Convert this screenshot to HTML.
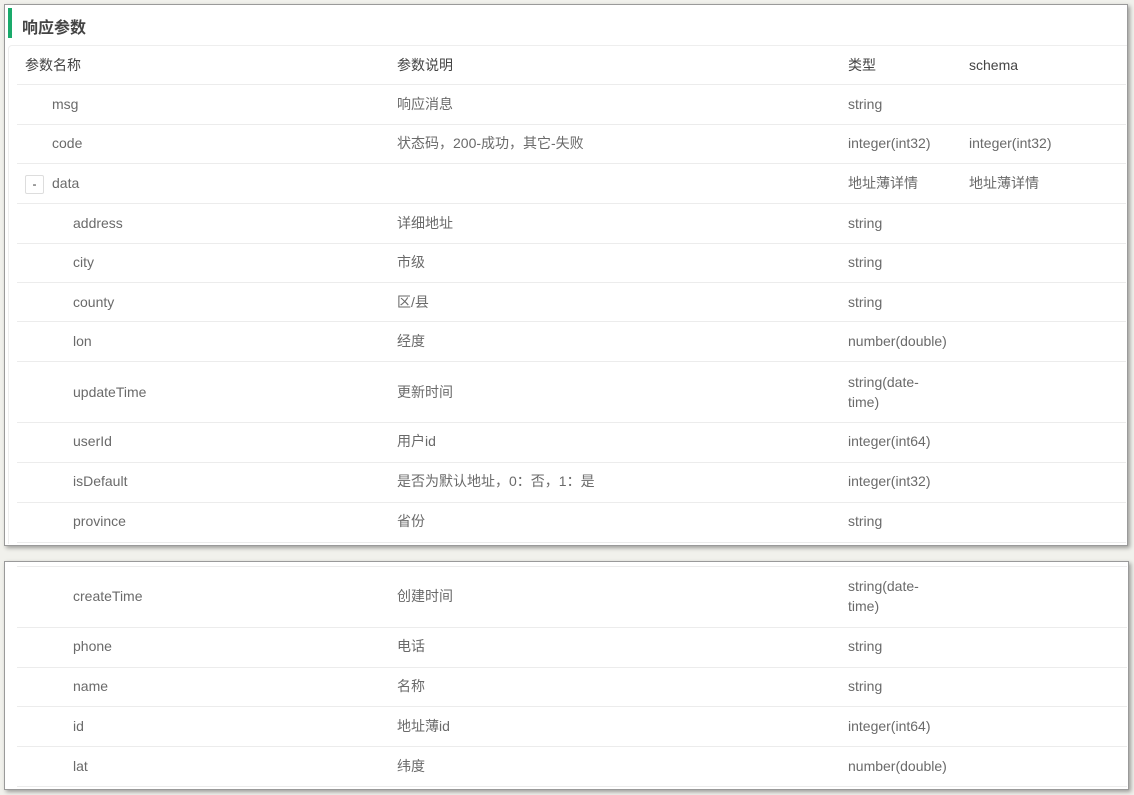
<!DOCTYPE html>
<html><head><meta charset="utf-8"><style>
body{margin:0;width:1134px;height:795px;background:#f1f1ec;position:relative;overflow:hidden;font-family:"Liberation Sans","Noto Sans CJK SC",sans-serif;font-size:14px;color:#6a6a6a}
.p{position:absolute;background:#fff;border:1px solid #9a9a9a;box-shadow:2px 2px 4px rgba(0,0,0,.35)}
.t{position:absolute;white-space:nowrap;line-height:20px}
.l{position:absolute;height:1px;background:#ececec;left:17px;right:0}
.bar{position:absolute;left:8px;top:8px;width:4px;height:30px;background:#1aaa6b}
.h{position:absolute;left:22px;top:14px;font-size:16px;font-weight:bold;color:#444}
.btn{position:absolute;left:25px;top:175px;width:17px;height:17px;border:1px solid #ddd;border-radius:2px;font-size:12px;text-align:center;line-height:16px;color:#333}
</style></head><body>
<div class="p" style="left:4px;top:4px;width:1122px;height:540px"></div>
<div class="p" style="left:4px;top:561px;width:1123px;height:227px"></div>
<div class="bar"></div><div class="h">响应参数</div>
<div style="position:absolute;left:8px;top:45px;width:1118px;height:498px;border-left:1px solid #eee;border-top:1px solid #eee;border-radius:4px 0 0 0"></div>
<div class="btn">-</div>
<div id="c"></div>
<script>
var rows=[
[65,"参数名称",25,"参数说明","类型","schema",1],
[104,"msg",52,"响应消息","string",""],
[143,"code",52,"状态码，200-成功，其它-失败","integer(int32)","integer(int32)"],
[183,"data",52,"","地址薄详情","地址薄详情"],
[223,"address",73,"详细地址","string",""],
[262,"city",73,"市级","string",""],
[302,"county",73,"区/县","string",""],
[341,"lon",73,"经度","number(double)",""],
[392,"updateTime",73,"更新时间","string(date-<br>time)",""],
[441,"userId",73,"用户id","integer(int64)",""],
[481,"isDefault",73,"是否为默认地址，0：否，1：是","integer(int32)",""],
[521,"province",73,"省份","string",""],
[596,"createTime",73,"创建时间","string(date-<br>time)",""],
[646,"phone",73,"电话","string",""],
[686,"name",73,"名称","string",""],
[726,"id",73,"地址薄id","integer(int64)",""],
[766,"lat",73,"纬度","number(double)",""]];
var lines=[84,124,163,203,243,282,321,361,422,462,502,542,566,627,667,706,746,786];
var h="";
rows.forEach(function(r){var c=r[6]?"color:#444;":"";var two=r[4].indexOf("<br>")>0;
h+='<div class="t" style="'+c+'left:'+r[2]+'px;top:'+(r[0]-10)+'px">'+r[1]+'</div>';
h+='<div class="t" style="'+c+'left:397px;top:'+(r[0]-10)+'px">'+r[3]+'</div>';
h+='<div class="t" style="'+c+'left:848px;top:'+(r[0]-(two?20:10))+'px">'+r[4]+'</div>';
h+='<div class="t" style="'+c+'left:969px;top:'+(r[0]-10)+'px">'+r[5]+'</div>';});
lines.forEach(function(y){h+='<div class="l" style="top:'+y+'px;right:'+(y>550?7:8)+'px"></div>'});
document.getElementById("c").innerHTML=h;
</script>
</body></html>
